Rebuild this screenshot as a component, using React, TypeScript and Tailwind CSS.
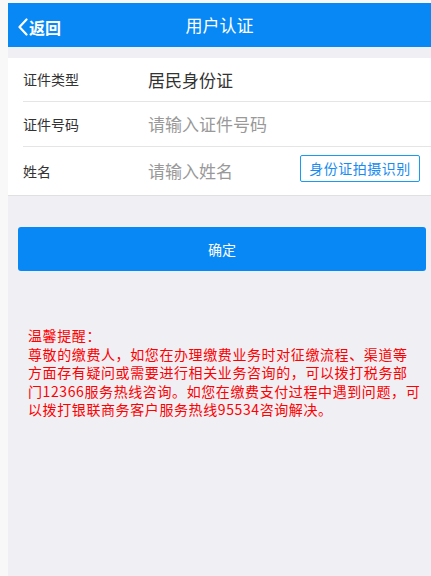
import React from 'react'

const font = { fontFamily: '"Noto Sans CJK SC", "Liberation Sans", sans-serif' }

const Row: React.FC<{ label: string; h: string; last?: boolean; children: React.ReactNode }> = ({ label, h, last, children }) => (
  <div className={`ml-[15px] flex items-center ${h} ${last ? '' : 'border-b border-[#e5e5e5]'}`}>
    <div className="w-[125px] shrink-0 text-[14px] text-[#333]">{label}</div>
    {children}
  </div>
)

const tips = [
  '尊敬的缴费人，如您在办理缴费业务时对征缴流程、渠道等',
  '方面存有疑问或需要进行相关业务咨询的，可以拨打税务部',
  '门12366服务热线咨询。如您在缴费支付过程中遇到问题，可',
  '以拨打银联商务客户服务热线95534咨询解决。',
]

export default function App() {
  return (
    <div className="flex min-h-[576px] bg-[#f8f8f8] pl-[8px] pt-[3px]" style={font}>
      <div className="flex min-h-[573px] flex-1 flex-col bg-[#efeff4]">
        {/* header */}
        <div className="relative flex h-[44px] items-center justify-center bg-[#0888f5]">
          <div className="absolute left-[9px] top-0 flex h-full items-center text-white">
            <svg width="12" height="18" viewBox="0 0 12 18" className="mt-[3px]">
              <path d="M9.5 1.5 L2.5 9 L9.5 16.5" fill="none" stroke="white" strokeWidth="2.2" strokeLinecap="round" strokeLinejoin="round" />
            </svg>
            <span className="mt-[3px] text-[16px] font-bold">返回</span>
          </div>
          <span className="text-[17px] text-white">用户认证</span>
        </div>

        {/* form */}
        <div className="mt-[11px] border-b border-[#e0e0e0] bg-white">
          <Row label="证件类型" h="h-[44px]">
            <span className="text-[17px] text-[#333]">居民身份证</span>
          </Row>
          <Row label="证件号码" h="h-[45px]">
            <span className="text-[17px] text-[#999]">请输入证件号码</span>
          </Row>
          <Row label="姓名" h="h-[48px]" last>
            <span className="flex-1 text-[17px] text-[#999]">请输入姓名</span>
            <button className="mr-[11px] mt-[-6px] h-[27px] w-[120px] rounded-[2px] border border-[#1a9bf0] text-[14px] tracking-[0.5px] text-[#1a8cf0]">
              身份证拍摄识别
            </button>
          </Row>
        </div>

        {/* confirm */}
        <button className="ml-[10px] mr-[5px] mt-[31px] h-[44px] rounded-[3px] bg-[#0888f5] text-[14px] text-white">
          确定
        </button>

        {/* tips */}
        <div className="ml-[20px] mt-[55px] text-[14px] leading-[18.5px] tracking-[0.6px] text-[#ff0000]">
          <p>温馨提醒：</p>
          {tips.map((line) => (
            <p key={line} className="whitespace-nowrap">{line}</p>
          ))}
        </div>
      </div>
    </div>
  )
}
